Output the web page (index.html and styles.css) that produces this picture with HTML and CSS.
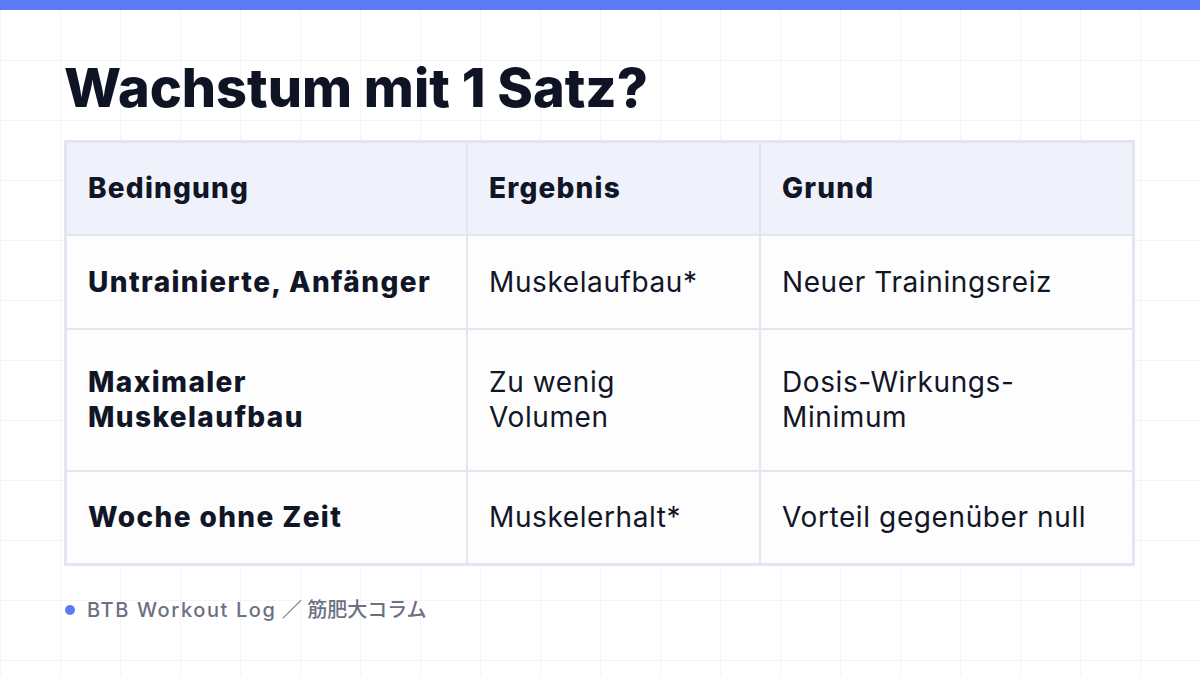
FILE: index.html
```html
<!DOCTYPE html>
<html lang="de">
<head>
<meta charset="utf-8">
<link rel="stylesheet" href="styles.css">
</head>
<body>
<div class="topbar"></div>
<main class="page">
  <h1 class="title">Wachstum mit 1 Satz?</h1>
  <div class="table">
    <div class="cell head">Bedingung</div>
    <div class="cell head">Ergebnis</div>
    <div class="cell head">Grund</div>

    <div class="cell strong">Untrainierte, Anfänger</div>
    <div class="cell">Muskelaufbau*</div>
    <div class="cell">Neuer Trainingsreiz</div>

    <div class="cell strong">Maximaler<br>Muskelaufbau</div>
    <div class="cell">Zu wenig<br>Volumen</div>
    <div class="cell">Dosis-Wirkungs-<br>Minimum</div>

    <div class="cell strong">Woche ohne Zeit</div>
    <div class="cell">Muskelerhalt*</div>
    <div class="cell">Vorteil gegenüber null</div>
  </div>
  <footer class="footer"><span class="dot"></span><span class="src"><span class="src-latin">BTB Workout Log</span> ／ 筋肥大コラム</span></footer>
</main>
</body>
</html>
```
FILE: styles.css
```css
html, body {
  margin: 0;
  padding: 0;
}
body {
  width: 1200px;
  height: 675px;
  overflow: hidden;
  background-color: #ffffff;
  background-image:
    linear-gradient(to right, #f3f4f7 1px, transparent 1px),
    linear-gradient(to bottom, #f3f4f7 1px, transparent 1px);
  background-size: 60px 60px;
  background-position: 0 0;
  font-family: Inter, "Noto Sans CJK JP", sans-serif;
  color: #111827;
}
.topbar {
  height: 10px;
  background: #5b7cf6;
}
.page {
  padding: 0 65px 0 64px;
}
.title {
  margin: 0;
  padding-top: 46px;
  height: 84px;
  font-size: 54px;
  line-height: 64px;
  font-weight: 800;
  letter-spacing: 0;
  color: #0f1424;
}
.table {
  display: grid;
  grid-template-columns: 399px 291px 371px;
  grid-template-rows: 91px 92px 140px 91px;
  gap: 2px;
  background: #e3e6f1;
  border: 3px solid #e3e6f1;
  width: 1065px;
}
.cell {
  background: rgba(255, 255, 255, 0.9);
  display: flex;
  align-items: center;
  padding: 0 20px 0 21px;
  font-size: 28px;
  line-height: 35px;
  font-weight: 400;
  letter-spacing: 0.6px;
  color: #111627;
}
.cell.head {
  background: #f0f2fb;
  font-weight: 800;
  letter-spacing: 1.2px;
}
.cell.strong {
  font-weight: 800;
  letter-spacing: 1.4px;
}
.footer {
  display: flex;
  align-items: center;
  margin-top: 30px;
  gap: 12px;
  padding-left: 1px;
}
.dot {
  width: 10px;
  height: 10px;
  border-radius: 50%;
  background: #5b7cf6;
}
.src {
  font-size: 20px;
  line-height: 28px;
  font-weight: 500;
  color: #6b7180;
}
.src-latin {
  letter-spacing: 1.6px;
}
```
